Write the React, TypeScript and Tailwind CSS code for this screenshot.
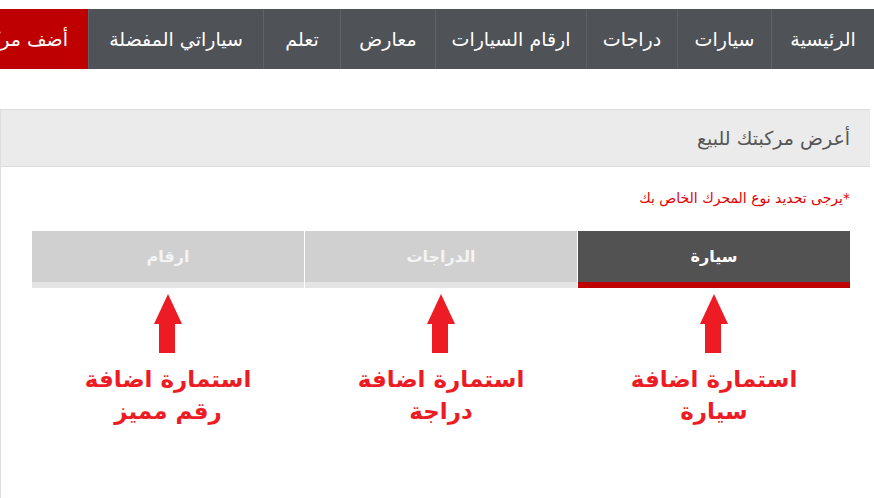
import React from "react";

const navItems = [
  { label: "الرئيسية", w: "w-[103px]" },
  { label: "سيارات", w: "w-[94px]" },
  { label: "دراجات", w: "w-[91px]" },
  { label: "ارقام السيارات", w: "w-[151px]" },
  { label: "معارض", w: "w-[95px]" },
  { label: "تعلم", w: "w-[77px]" },
  { label: "سياراتي المفضلة", w: "w-[175px]" },
];

function Arrow() {
  return (
    <svg width="30" height="60" viewBox="0 0 30 60" className="block">
      <polygon points="15,0 29,30 22,30 22,59 6,59 6,30 1,30" fill="#ed1c24" />
    </svg>
  );
}

const tabs = [
  { label: "سيارة", active: true, l1: "استمارة اضافة", l2: "سيارة" },
  { label: "الدراجات", active: false, l1: "استمارة اضافة", l2: "دراجة" },
  { label: "ارقام", active: false, l1: "استمارة اضافة", l2: "رقم مميز" },
];

export default function App() {
  return (
    <div
      dir="rtl"
      className="w-[874px] h-[498px] overflow-hidden bg-white"
      style={{ fontFamily: '"DejaVu Sans", sans-serif' }}
    >
      <div className="h-[9px]" />
      <nav className="flex h-[60px] bg-[#4f5257] overflow-hidden">
        {navItems.map((it) => (
          <div
            key={it.label}
            className={`${it.w} shrink-0 flex items-center justify-center border-l border-[#5e6166] text-white text-[19px] whitespace-nowrap`}
          >
            {it.label}
          </div>
        ))}
        <div className="shrink-0 w-[160px] flex items-center pr-[20px] bg-[#bf0000] text-white text-[19px] whitespace-nowrap">
          أضف مركبتك
        </div>
      </nav>
      <div className="h-[40px]" />
      <div className="w-[870px] border-l border-[#dddddd] border-y border-y-[#dddddd] mr-[4px] h-[400px]">
        <div className="h-[57px] bg-[#ebebeb] border-b border-[#dddddd] flex items-center pr-[20px] text-[19px] text-[#555555]">
          أعرض مركبتك للبيع
        </div>
        <div className="pr-[20px] pl-[20px]">
          <div className="pt-[21px] h-[64px] text-[14px] text-[#e20000]">*يرجى تحديد نوع المحرك الخاص بك</div>
          <div className="flex w-[818px] mr-0">
            {tabs.map((t, i) => (
              <div key={t.label} className={`flex-1 flex flex-col ${i > 0 ? "border-r border-white" : ""}`}>
                <div
                  className={`h-[51px] flex items-center justify-center text-[16px] font-bold ${
                    t.active ? "bg-[#525252] text-white" : "bg-[#d0d0d0] text-[#f4f4f4]"
                  }`}
                >
                  {t.label}
                </div>
                <div className={`h-[6px] ${t.active ? "bg-[#bf0000]" : "bg-[#e4e4e4]"}`} />
                <div className="flex flex-col items-center pt-[6px]">
                  <Arrow />
                  <div className="mt-[9px] text-[23px] leading-[32px] font-bold text-[#ed1c24] text-center">
                    <div>{t.l1}</div>
                    <div>{t.l2}</div>
                  </div>
                </div>
              </div>
            ))}
          </div>
        </div>
      </div>
    </div>
  );
}
